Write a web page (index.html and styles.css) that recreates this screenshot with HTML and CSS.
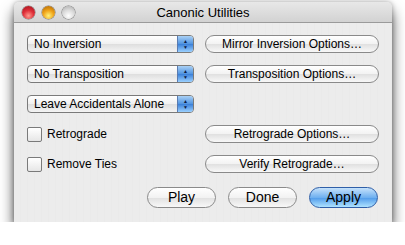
FILE: index.html
```html
<!DOCTYPE html>
<html lang="en">
<head>
  <meta charset="UTF-8">
  <title>Canonic Utilities</title>
  <link rel="stylesheet" href="styles.css">
</head>
<body>
  <div class="window">
    <!-- title bar -->
    <div class="titlebar">
      <div class="lights">
        <span class="light red"></span>
        <span class="light yellow"></span>
        <span class="light gray"></span>
      </div>
      <div class="title">Canonic Utilities</div>
    </div>

    <div class="content">
      <div class="grid">
        <div class="popup"><span class="popup-label">No Inversion</span><span class="popup-arrows">&#9650;<br>&#9660;</span></div>
        <div class="button">Mirror Inversion Options…</div>

        <div class="popup"><span class="popup-label">No Transposition</span><span class="popup-arrows">&#9650;<br>&#9660;</span></div>
        <div class="button">Transposition Options…</div>

        <div class="popup"><span class="popup-label">Leave Accidentals Alone</span><span class="popup-arrows">&#9650;<br>&#9660;</span></div>
        <div></div>

        <label class="check"><span class="box"></span>Retrograde</label>
        <div class="button">Retrograde Options…</div>

        <label class="check"><span class="box"></span>Remove Ties</label>
        <div class="button">Verify Retrograde…</div>
      </div>

      <div class="actions">
        <div class="button big">Play</div>
        <div class="button big">Done</div>
        <div class="button big default">Apply</div>
      </div>
    </div>
  </div>
</body>
</html>
```

FILE: styles.css
```css
/* page */
body {
  margin: 0;
  padding: 2px 0 0 14px;
  background-color: #ffffff;
  font-family: "Liberation Sans", Arial, sans-serif;
  font-size: 12px;
  color: #000;
}

/* window frame */
.window {
  width: 378px;
  height: 220px;
  background-color: #ececec;
  background-image: repeating-linear-gradient(90deg, #ececec 0, #ececec 6px, #e8e8e8 7px);
  border-radius: 5px 5px 0 0;
  box-shadow: 0 9px 14px rgba(0, 0, 0, 0.7), 0 0 5px rgba(0, 0, 0, 0.3);
}

/* title bar */
.titlebar {
  height: 20px;
  display: flex;
  align-items: center;
  position: relative;
  border-radius: 5px 5px 0 0;
  background: linear-gradient(#e8e8e8, #d2d2d2);
  border-bottom: 1px solid #9a9a9a;
}

.lights {
  display: flex;
  gap: 7px;
  padding-left: 8px;
}

.light {
  width: 13px;
  height: 13px;
  border-radius: 50%;
  box-shadow: 0 0 0 0.5px rgba(0, 0, 0, 0.45);
}

.red {
  background: radial-gradient(circle at 50% 75%, #ff9b8f 0, #e0303a 45%, #9c0f18 100%);
}

.yellow {
  background: radial-gradient(circle at 50% 75%, #fff27a 0, #f0a41a 45%, #a86000 100%);
}

.gray {
  background: radial-gradient(circle at 50% 75%, #ffffff 0, #dadada 50%, #a8a8a8 100%);
}

.title {
  position: absolute;
  left: 0;
  right: 0;
  text-align: center;
  font-size: 13px;
  pointer-events: none;
}

/* content */
.content {
  padding: 12px 13px 0 13px;
}

.grid {
  display: grid;
  grid-template-columns: 167px 174px;
  column-gap: 11px;
  grid-auto-rows: 18px;
  row-gap: 12px;
  align-items: center;
}

/* popup menus */
.popup {
  height: 16px;
  display: flex;
  border: 1px solid #7a7a7a;
  border-radius: 4px;
  background: linear-gradient(#ffffff, #f0f0f0 50%, #dedede 51%, #f4f4f4);
  overflow: hidden;
}

.popup-label {
  flex: 1;
  padding-left: 6px;
  line-height: 16px;
  white-space: nowrap;
}

.popup-arrows {
  width: 16px;
  border-left: 1px solid #5a7bb0;
  background: linear-gradient(#a9d0f5, #4f93e0 50%, #3a7fd8 51%, #9ad0ff);
  color: #0c1a40;
  font-size: 5px;
  line-height: 6px;
  text-align: center;
  padding-top: 2px;
  box-sizing: border-box;
}

/* push buttons */
.button {
  height: 16px;
  border: 1px solid #8a8a8a;
  border-radius: 9px;
  background: linear-gradient(#ffffff, #f2f2f2 50%, #e0e0e0 51%, #f8f8f8);
  text-align: center;
  line-height: 16px;
  white-space: nowrap;
}

/* checkboxes */
.check {
  display: flex;
  align-items: center;
  gap: 5px;
  font-size: 12px;
}

.box {
  width: 13px;
  height: 13px;
  border: 1px solid #7a7a7a;
  border-radius: 2px;
  background: linear-gradient(#ffffff, #e6e6e6);
}

/* bottom buttons */
.actions {
  display: flex;
  justify-content: flex-end;
  gap: 12px;
  margin-top: 14px;
  padding-right: 1px;
}

.button.big {
  width: 67px;
  height: 19px;
  line-height: 19px;
  border-radius: 11px;
  font-size: 14px;
}

.button.default {
  border-color: #2f5fa8;
  background: linear-gradient(#c6e2fb, #6fb0f0 50%, #4f9aea 51%, #aee2ff);
}
```
